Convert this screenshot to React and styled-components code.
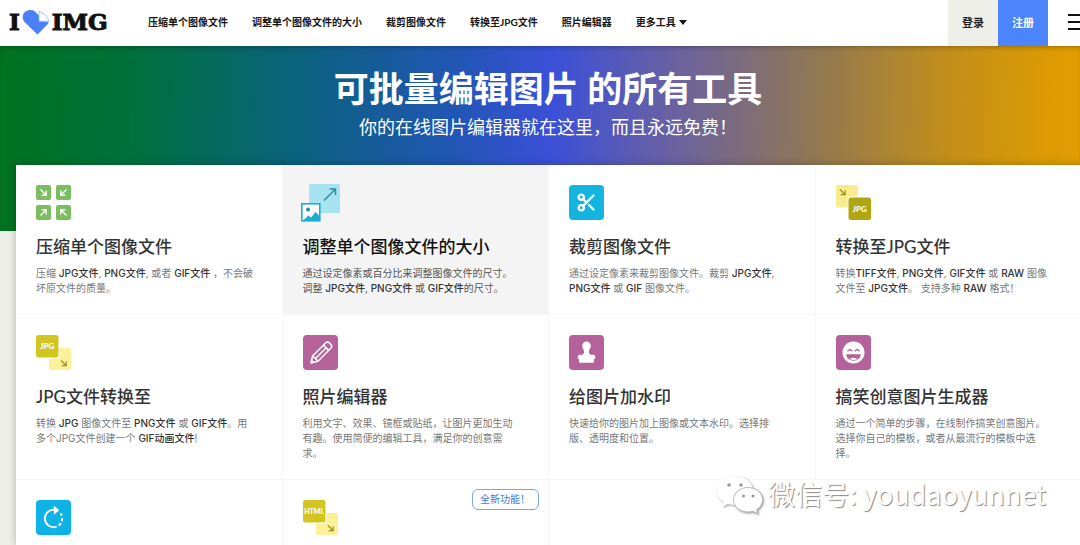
import React from 'react';
import styled, { createGlobalStyle } from 'styled-components';
import { Scissors } from 'lucide-react';

const FONT = `Lato, 'Noto Sans CJK SC', sans-serif`;

const navItems = [
  '压缩单个图像文件',
  '调整单个图像文件的大小',
  '裁剪图像文件',
  '转换至JPG文件',
  '照片编辑器',
];

// 工具卡片
const tools = [
  {
    id: 'compress',
    icon: <CompressIcon />,
    title: '压缩单个图像文件',
    text: (
      <>
        压缩 <b>JPG文件</b>, <b>PNG文件</b>, 或者 <b>GIF文件</b> ，不会破坏原文件的质量。
      </>
    ),
  },
  {
    id: 'resize',
    icon: <ResizeIcon />,
    title: '调整单个图像文件的大小',
    active: true,
    text: (
      <>
        通过设定像素或百分比来调整图像文件的尺寸。调整 <b>JPG文件</b>, <b>PNG文件</b> 或{' '}
        <b>GIF文件</b>的尺寸。
      </>
    ),
  },
  {
    id: 'crop',
    icon: <CropIcon />,
    title: '裁剪图像文件',
    text: (
      <>
        通过设定像素来裁剪图像文件。裁剪 <b>JPG文件</b>, <b>PNG文件</b> 或 <b>GIF</b> 图像文件。
      </>
    ),
  },
  {
    id: 'to-jpg',
    icon: <ToJpgIcon />,
    title: '转换至JPG文件',
    text: (
      <>
        转换<b>TIFF文件</b>, <b>PNG文件</b>, <b>GIF文件</b> 或 <b>RAW</b> 图像文件至{' '}
        <b>JPG文件</b>。 支持多种 <b>RAW</b> 格式！
      </>
    ),
  },
  {
    id: 'from-jpg',
    icon: <FromIcon label="JPG" />,
    title: 'JPG文件转换至',
    text: (
      <>
        转换 <b>JPG</b> 图像文件至 <b>PNG文件</b> 或 <b>GIF文件</b>。用多个JPG文件创建一个{' '}
        <b>GIF动画文件</b>!
      </>
    ),
  },
  {
    id: 'editor',
    icon: <PencilIcon />,
    title: '照片编辑器',
    text: '利用文字、效果、镜框或贴纸，让图片更加生动有趣。使用简便的编辑工具，满足你的创意需求。',
  },
  {
    id: 'watermark',
    icon: <StampIcon />,
    title: '给图片加水印',
    text: '快速给你的图片加上图像或文本水印。选择排版、透明度和位置。',
  },
  {
    id: 'meme',
    icon: <MemeIcon />,
    title: '搞笑创意图片生成器',
    text: '通过一个简单的步骤，在线制作搞笑创意图片。选择你自己的模板，或者从最流行的模板中选择。',
  },
  { id: 'rotate', icon: <RotateIcon /> },
  { id: 'from-html', icon: <FromIcon label="HTML" />, badge: '全新功能！' },
];

function CompressIcon() {
  const cells = [
    [0, 0, 0],
    [20, 0, 90],
    [20, 20, 180],
    [0, 20, 270],
  ];
  return (
    <Icon viewBox="0 0 35 35">
      {cells.map(([x, y, r]) => (
        <g key={r} transform={`translate(${x} ${y}) rotate(${r} 7.5 7.5)`}>
          <rect width="15" height="15" rx="2" fill="#7dbd62" />
          <path d="M4.5 4.5l5.5 5.5M10.2 5.6v4.6H5.6" fill="none" stroke="#fff" strokeWidth="1.4" />
        </g>
      ))}
    </Icon>
  );
}

function ResizeIcon() {
  return (
    <Icon viewBox="0 0 35 35">
      <rect x="6" y="-1" width="31" height="29" rx="1" fill="#a8e3f1" />
      <path d="M21 15.5L32 4.5M26.5 4H32.5V10" fill="none" stroke="#2a8ca5" strokeWidth="1.5" />
      <rect x="-1.2" y="18.8" width="18" height="17" fill="#fff" stroke="#1aafd0" strokeWidth="1.6" />
      <circle cx="5" cy="24.5" r="1.9" fill="#1a8fae" />
      <path d="M0.5 35l5-4.5 2.5 2 4.5-5.5 4.3 4.5V35z" fill="#1aafd8" />
    </Icon>
  );
}

function CropIcon() {
  return (
    <Icon viewBox="0 0 35 35">
      <rect width="35" height="35" rx="4" fill="#14b4e0" />
      <Scissors x="7" y="7" width="21" height="21" color="#fff" strokeWidth="2.6" />
    </Icon>
  );
}

function ToJpgIcon() {
  return (
    <Icon viewBox="0 0 35 35">
      <rect width="22" height="22" rx="2" fill="#f8ec8e" />
      <path d="M4 4.5l5 5M9.2 5.2v4.4H4.8" fill="none" stroke="#9a8f1c" strokeWidth="1.2" />
      <rect x="11.5" y="11.5" width="24" height="24" rx="3" fill="#fff" />
      <rect x="12.5" y="12.5" width="22.5" height="22.5" rx="2.5" fill="#b0a512" />
      <IconText x="23.7" y="26.5" textAnchor="middle">
        JPG
      </IconText>
    </Icon>
  );
}

function FromIcon({ label }) {
  return (
    <Icon viewBox="0 0 35 35">
      <rect x="13" y="13" width="22" height="22" rx="2" fill="#fbf19a" />
      <path d="M25 25.5l5 5M30.2 26.2v4.4h-4.4" fill="none" stroke="#9a8f1c" strokeWidth="1.2" />
      <rect width="23.5" height="23.5" rx="3" fill="#fff" />
      <rect width="22.5" height="22.5" rx="2.5" fill="#d3c51f" />
      <IconText x="11.2" y="14" textAnchor="middle" $small={label.length > 3}>
        {label}
      </IconText>
    </Icon>
  );
}

function PencilIcon() {
  return (
    <Icon viewBox="0 0 35 35">
      <rect width="35" height="35" rx="4" fill="#b5629a" />
      <g fill="none" stroke="#fff" strokeWidth="1.6" strokeLinejoin="round">
        <path d="M8 28l1.6-7L22.8 7.8a2.4 2.4 0 0 1 3.4 0l1.8 1.8a2.4 2.4 0 0 1 0 3.4L15 26.2z" />
        <path d="M20.5 10.2l5.2 5.2M9.8 21l5 5M12.5 23.5L23.2 12.8" />
      </g>
      <path d="M8 28l.8-3.4 2.6 2.6z" fill="#fff" />
    </Icon>
  );
}

function StampIcon() {
  return (
    <Icon viewBox="0 0 35 35">
      <rect width="35" height="35" rx="4" fill="#b5629a" />
      <path
        d="M17.5 6.5a4.3 4.3 0 0 1 4.3 4.3c0 2.4-1.8 3.4-1.8 5.6 0 1.9.6 3.3 2 3.3h2.6a1.6 1.6 0 0 1 1.6 1.6V24H8.8v-2.7a1.6 1.6 0 0 1 1.6-1.6H13c1.4 0 2-1.4 2-3.3 0-2.2-1.8-3.2-1.8-5.6a4.3 4.3 0 0 1 4.3-4.3z"
        fill="#fff"
      />
      <rect x="10" y="23.5" width="15" height="4.3" rx="0.8" fill="#fff" />
    </Icon>
  );
}

function MemeIcon() {
  return (
    <Icon viewBox="0 0 35 35">
      <rect width="35" height="35" rx="4" fill="#b5629a" />
      <circle cx="17.5" cy="17.5" r="11" fill="#fff" />
      <path
        d="M11.5 16.2l2.4-2 2.4 2M18.7 16.2l2.4-2 2.4 2"
        fill="none"
        stroke="#a2668f"
        strokeWidth="1.2"
      />
      <path d="M10.2 19.2h14.6a7.3 6.6 0 0 1-14.6 0z" fill="#b5629a" />
      <path d="M13.6 24a5.5 4.4 0 0 1 7.8 0 7.3 6.6 0 0 1-7.8 0z" fill="#fff" />
    </Icon>
  );
}

function RotateIcon() {
  return (
    <Icon viewBox="0 0 35 35">
      <rect width="35" height="35" rx="4" fill="#0db2e6" />
      <g fill="none" stroke="#fff" strokeWidth="2">
        <path d="M17.5 27.2a8.7 8.7 0 0 1 0-17.4h1.8" />
        <path d="M17.5 27.2a8.7 8.7 0 0 0 7-13.8" strokeDasharray="3.2 2.2" />
      </g>
      <path d="M17.8 5.6l5.4 4.6-5.4 4.6z" fill="#fff" />
    </Icon>
  );
}

function Logo() {
  return (
    <LogoLink href="#home" aria-label="I love IMG">
      <span>I</span>
      <LogoHeart viewBox="0 0 28 26">
        <path
          d="M15.5 25.5L2.8 13.2C-.6 9.6.2 4 4.4 2 8 .2 11.6.8 14 3.4l3 3.2V12l10 .8-1.6 2.6z"
          fill="#4a80f7"
        />
        <path
          d="M17 2.4v9.8h9.8C25.6 7.6 22 3.8 17 2.4z"
          fill="#fff"
          stroke="#8db1f8"
          strokeWidth="0.8"
        />
      </LogoHeart>
      <span>IMG</span>
    </LogoLink>
  );
}

function ToolCard({ tool }) {
  const { icon, title, text, active, badge, id } = tool;
  return (
    <Card href={`#${id}`} $active={active} aria-label={title ? undefined : id}>
      {icon}
      {badge && <Badge>{badge}</Badge>}
      {title && <CardTitle $active={active}>{title}</CardTitle>}
      {text && <CardText $active={active}>{text}</CardText>}
    </Card>
  );
}

function App() {
  return (
    <Page>
      <GlobalStyle />
      <Header>
        <Logo />
        <Nav>
          {navItems.map((item) => (
            <NavLink key={item} href="#tool">
              {item}
            </NavLink>
          ))}
          <MoreButton type="button">
            更多工具
            <Caret viewBox="0 0 8 5">
              <path d="M0 0h8L4 5z" fill="currentColor" />
            </Caret>
          </MoreButton>
        </Nav>
        <LoginButton type="button">登录</LoginButton>
        <LoginButton type="button" $primary>
          注册
        </LoginButton>
        <MenuButton type="button" aria-label="菜单">
          <svg width="22" height="16" viewBox="0 0 22 16">
            <path d="M0 1h22M0 8h22M0 15h22" stroke="#111" strokeWidth="2" />
          </svg>
        </MenuButton>
      </Header>
      <Hero>
        <HeroTitle>可批量编辑图片 的所有工具</HeroTitle>
        <HeroText>你的在线图片编辑器就在这里，而且永远免费！</HeroText>
      </Hero>
      <Board>
        {tools.map((tool) => (
          <ToolCard key={tool.id} tool={tool} />
        ))}
      </Board>
      <Account>
        <WechatIcon viewBox="0 0 48 42">
          <path
            d="M19 3C9 3 1 9.5 1 17.8c0 4.6 2.6 8.6 6.6 11.2L6 34l6-3c2.3.7 4.6 1 7 1 10 0 18-6.4 18-14.4S29 3 19 3z"
            fill="#fff"
          />
          <path
            d="M32 14.5c-8.2 0-14.5 5.5-14.5 12.3S23.8 39 32 39c1.7 0 3.4-.2 5-.7l5 2.700-1.400-4.300c3.600-2.200 6-5.800 6-9.900 0-6.800-6.400-12.300-14.600-12.300z"
            fill="#fff"
            stroke="#aaa"
            strokeWidth="0.8"
          />
          <g fill="#999">
            <circle cx="13" cy="12" r="1.8" />
            <circle cx="25" cy="12" r="1.8" />
            <circle cx="27.5" cy="23" r="1.5" />
            <circle cx="37" cy="23" r="1.5" />
          </g>
        </WechatIcon>
        微信号: youdaoyunnet
      </Account>
    </Page>
  );
}

export default App;

const GlobalStyle = createGlobalStyle`
  * {
    box-sizing: border-box;
  }
  body {
    margin: 0;
    font-family: ${FONT};
    background: #efefe9;
  }
  a {
    color: inherit;
    text-decoration: none;
  }
  button {
    border: 0;
    padding: 0;
    background: none;
    font: inherit;
    color: inherit;
    cursor: pointer;
  }
`;

const Page = styled.div`
  position: relative;
  display: flex;
  flex-direction: column;
  height: 100vh;
  overflow: hidden;
`;

const Header = styled.header`
  display: flex;
  flex-shrink: 0;
  height: 46px;
  background: #fff;
  color: #161616;
  overflow: hidden;
`;

const LogoLink = styled.a`
  display: flex;
  align-items: center;
  width: 148px;
  padding: 0 0 2px 9px;
  color: #111;
  font-family: 'DejaVu Serif', serif;
  font-size: 23px;
  font-weight: 700;
  line-height: 26px;
  -webkit-text-stroke: 1px #111;
`;

const LogoHeart = styled.svg`
  width: 28px;
  height: 26px;
  margin: 0 2px;
`;

const Nav = styled.nav`
  display: flex;
  flex: 1;
  align-items: center;
  gap: 24px;
  padding-bottom: 2px;
  font-size: 10px;
  font-weight: 700;
  line-height: 16px;
  white-space: nowrap;
`;

const NavLink = styled.a`
  display: block;
`;

const MoreButton = styled.button`
  display: flex;
  align-items: center;
  gap: 3px;
`;

const Caret = styled.svg`
  width: 8px;
  height: 5px;
`;

const LoginButton = styled.button`
  width: 50px;
  padding-bottom: 2px;
  font-size: 11px;
  font-weight: 700;
  color: ${(props) => (props.$primary ? '#fff' : '#222')};
  background: ${(props) => (props.$primary ? '#4c84fc' : '#efefe9')};
`;

const MenuButton = styled.button`
  flex-shrink: 0;
  width: 32px;
  padding: 0 0 2px 20px;
  text-align: left;
  overflow: hidden;

  svg {
    display: block;
  }
`;

const Hero = styled.section`
  flex-shrink: 0;
  height: 185px;
  padding: 18px 0 0 16px;
  text-align: center;
  color: #fff;
  background: linear-gradient(
    92deg,
    #007320 0%,
    #00703a 12%,
    #0b6280 28%,
    #2156b4 42%,
    #3b50d8 51%,
    #6a61a2 62%,
    #94794f 76%,
    #c48f18 88%,
    #e09c00 98%
  );
  box-shadow: inset 0 4px 5px -3px rgba(0, 0, 0, 0.3);
`;

const HeroTitle = styled.h1`
  margin: 0;
  font-size: 35px;
  font-weight: 700;
  line-height: 48px;
`;

const HeroText = styled.p`
  margin: 2px 0 0;
  font-size: 18px;
  line-height: 26px;
`;

const Board = styled.main`
  display: grid;
  grid-template-columns: repeat(4, 1fr);
  grid-auto-rows: max-content;
  flex: 1;
  min-height: 0;
  margin: -66px -2px 0 16px;
  background: #fff;
  box-shadow: 0 0 8px rgba(0, 0, 0, 0.25);
`;

const Card = styled.a`
  position: relative;
  padding: 20px 27px 18px 20px;
  border-right: 1px solid #f7f7f7;
  border-bottom: 1px solid #f7f7f7;
  background: ${(props) => (props.$active ? '#f4f4f4' : '#fff')};
`;

const Icon = styled.svg`
  display: block;
  width: 35px;
  height: 35px;
  overflow: visible;
`;

const IconText = styled.text`
  font-family: Lato, sans-serif;
  font-size: ${(props) => (props.$small ? '7px' : '8px')};
  font-weight: 900;
  fill: #fff;
`;

const CardTitle = styled.h2`
  margin: 16px 0 8px;
  font-size: 17px;
  font-weight: 500;
  line-height: 22px;
  color: ${(props) => (props.$active ? '#111' : '#333')};
`;

const CardText = styled.p`
  margin: 0;
  font-family: Inter, 'Noto Sans CJK SC', sans-serif;
  font-size: 10px;
  line-height: 15px;
  color: ${(props) => (props.$active ? '#555' : '#777')};

  b {
    font-weight: 500;
    color: #333;
  }
`;

const Badge = styled.span`
  position: absolute;
  top: 9px;
  right: 9px;
  padding: 0 8px 0 7px;
  border: 1px solid #7fa5e4;
  border-radius: 6px;
  font-size: 10px;
  line-height: 19px;
  color: #3a78e0;
`;

// 右下角的公众号信息
const Account = styled.div`
  position: absolute;
  right: 34px;
  bottom: 30px;
  display: flex;
  align-items: center;
  gap: 4px;
  color: #fff;
  font-family: 'Noto Sans CJK SC', sans-serif;
  font-size: 27px;
  line-height: 40px;
  text-shadow: 1px 1px 1px #888;
`;

const WechatIcon = styled.svg`
  width: 48px;
  height: 42px;
  filter: drop-shadow(1px 1px 1px #999);
`;
